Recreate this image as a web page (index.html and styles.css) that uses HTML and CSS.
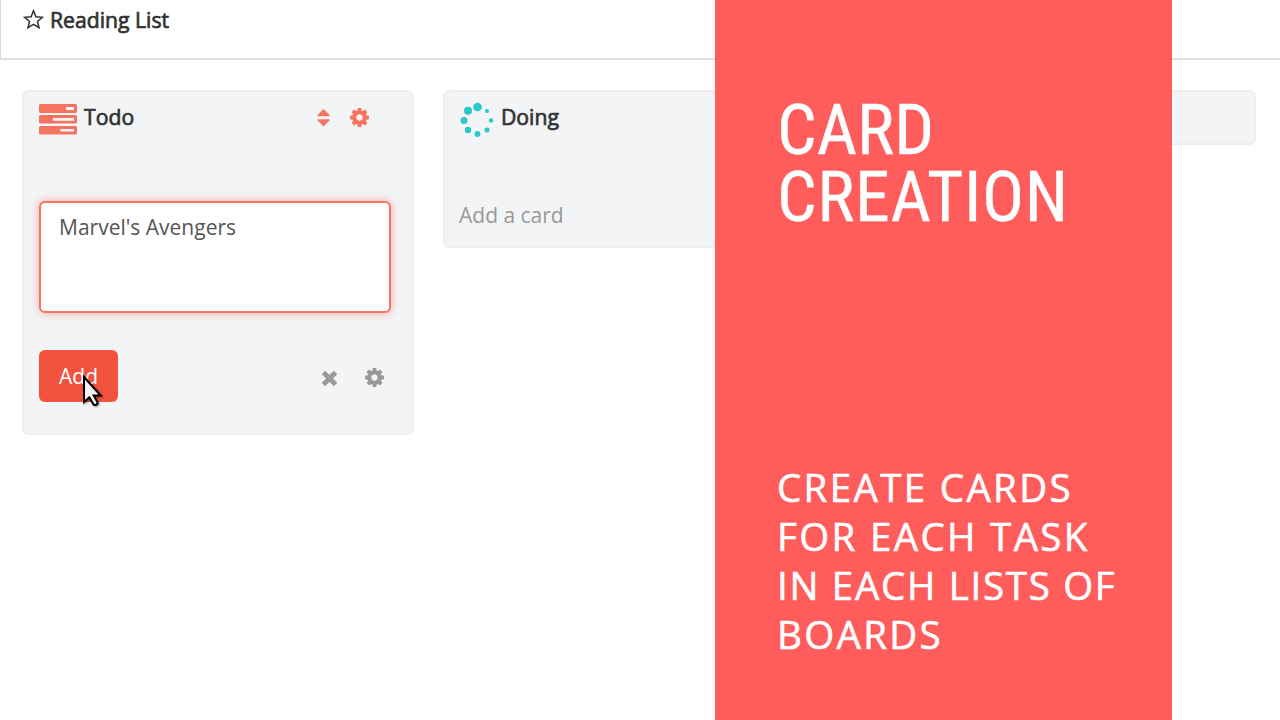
FILE: index.html
```html
<!DOCTYPE html>
<html lang="en">
<head>
<meta charset="utf-8">
<title>Reading List</title>
<link rel="stylesheet" href="styles.css">
</head>
<body>
<svg class="defs" aria-hidden="true">
  <symbol id="gear" viewBox="0 0 1536 1536">
    <path d="M1024 768q0-106-75-181t-181-75-181 75-75 181 75 181 181 75 181-75 75-181zm512-109v222q0 12-8 23t-20 13l-185 28q-19 54-39 91 35 50 107 138 10 12 10 25t-9 23q-27 37-99 108t-94 71q-12 0-26-9l-138-108q-44 23-91 38-16 136-29 186-7 28-36 28H657q-14 0-24.500-8.500T621 1506l-28-184q-49-16-90-37l-141 107q-10 9-25 9-14 0-25-11-126-114-165-168-7-10-7-23 0-12 8-23 15-21 51-66.500t54-70.500q-27-50-41-99L29 913q-13-2-21-12.500T0 877V655q0-12 8-23t19-13l186-28q14-46 39-92-40-57-107-138-10-12-10-24 0-10 9-23 26-36 98.500-107.500T337 135q13 0 26 10l138 107q44-23 91-38 16-136 29-186 7-28 36-28h222q14 0 24.500 8.500T915 30l28 184q49 16 90 37l142-107q9-9 24-9 13 0 25 10 129 119 165 170 7 8 7 22 0 12-8 23-15 21-51 66.500t-54 70.500q26 50 41 98l183 28q13 2 21 12.500t8 23.500z"/>
  </symbol>
</svg>
<div class="screen">
  <header class="board-bar">
    <svg class="star" viewBox="0 0 22 22"><path d="M11 1.800 13.500 8.100 20.300 8.700 15.100 13 16.800 19.500 11 16 5.200 19.500 6.900 13 1.700 8.700 8.500 8.100Z"/></svg>
    <h1 class="board-name">Reading List</h1>
  </header>
  <main class="lists">
    <section class="list list-todo">
      <div class="list-head">
        <svg class="tasks" viewBox="0 0 38 31"><path fill-rule="evenodd" d="M1.500 0h35q1.500 0 1.500 1.500v6q0 1.500-1.500 1.500h-35Q0 9 0 7.500v-6Q0 0 1.500 0ZM27 3v3h8V3ZM1.500 11h35q1.500 0 1.500 1.500v5.500q0 1.500-1.500 1.500h-35Q0 19.500 0 18v-5.500Q0 11 1.500 11ZM14 14v2.700h21V14ZM1.500 22h35q1.500 0 1.500 1.500V29q0 1.500-1.500 1.500h-35Q0 30.500 0 29v-5.500Q0 22 1.500 22ZM21.500 25v2.600H35V25Z"/></svg>
        <h2 class="list-name">Todo</h2>
        <svg class="sort" viewBox="0 0 13 18"><path d="M6.500 0 12.700 6.200Q13 7.200 12.200 7.200H.8Q0 7.200.3 6.200ZM6.500 17.600 12.700 11.300Q13 10.300 12.200 10.300H.8Q0 10.300.3 11.300Z"/></svg>
        <svg class="gear gear-head"><use href="#gear"/></svg>
      </div>
      <div class="card-input"><span class="card-text">Marvel's Avengers</span></div>
      <div class="actions">
        <div class="add"><span class="add-text">Add</span>
          <svg class="cursor" viewBox="0 0 22 32"><path d="M2 2v25l5.400-4.800 4 7q1 1.400 3 .4 1.800-1 .9-2.600l-3.600-6.400h7Z"/></svg>
        </div>
        <svg class="close" viewBox="0 0 16 16"><path d="M2.300 2.300 13.700 13.700M13.700 2.300 2.300 13.700"/></svg>
        <svg class="gear"><use href="#gear"/></svg>
      </div>
    </section>
    <section class="list list-doing">
      <div class="list-head">
        <svg class="spinner" viewBox="0 0 34 36"><circle cx="17.500" cy="5" r="4.300"/><circle cx="8" cy="8.800" r="4"/><circle cx="4" cy="18.500" r="3.500"/><circle cx="8" cy="28" r="3.200"/><circle cx="17.500" cy="32" r="2.900"/><circle cx="27" cy="28" r="2.500"/><circle cx="31" cy="18.500" r="2.200"/><circle cx="27" cy="9" r="2"/></svg>
        <h2 class="list-name">Doing</h2>
      </div>
      <div class="add-card">Add a card</div>
    </section>
    <section class="list list-new"></section>
  </main>
  <aside class="panel">
    <h2 class="title"><span class="title-short">Card</span><br>Creation</h2>
    <p class="caption">Create cards<br>for each task<br><span class="caption-long">in each lists of</span><br>boards</p>
  </aside>
</div>
</body>
</html>
```
FILE: styles.css
```css
* { box-sizing: border-box; }
body { margin: 0; background: #fff; font-family: "Open Sans", "Noto Sans", sans-serif; color: #333; }
h1, h2, p { margin: 0; font-weight: 400; }
svg { flex: none; display: block; }
.defs { position: absolute; width: 0; height: 0; }
.screen { position: relative; width: 1280px; height: 720px; overflow: hidden; }
.board-bar { display: flex; align-items: flex-start; height: 60px; padding: 5px 0 0 22px; border-left: 1px solid #d8d8d8; border-bottom: 2px solid #e0e0e0; }
.star { width: 21px; height: 21px; margin: 4px 6px 0 0; fill: none; stroke: #333; stroke-width: 1.6; }
.board-name, .list-name { font-size: 21.200px; line-height: 30px; white-space: nowrap; -webkit-text-stroke: 0.7px #333; }
.lists { display: flex; align-items: flex-start; gap: 29px; padding: 30px 0 0 22px; }
.list { flex: none; width: 392px; border: 2px solid #eeeeef; border-radius: 7px; background: #f2f4f6; }
.list-todo { height: 345px; padding: 12px 20px 0 15px; }
.list-doing { height: 158px; padding: 10px 14px 0 15px; }
.list-new { height: 55px; }
.list-head { display: flex; height: 40px; }
.tasks { width: 38px; height: 31px; margin-right: 7px; fill: #f6745f; }
.list-todo .list-name { margin-top: -2px; }
.sort { width: 13px; height: 18px; margin: 5px 20px 0 auto; fill: #f6745f; }
.gear { width: 19px; height: 19px; fill: #999; }
.gear-head { margin: 4px 23px 0 0; fill: #f6745f; }
.card-input { width: 352px; height: 112px; margin-top: 57px; padding: 8px 17px; border: 2px solid #f77463; border-radius: 6px; background: #fff; box-shadow: 0 0 9px rgba(246, 100, 80, .55); }
.card-text { display: block; font-size: 21px; line-height: 30px; color: #555; padding-top: 1px; padding-left: 1px; }
.actions { display: flex; align-items: flex-start; margin-top: 37px; padding-right: 8px; }
.add { position: relative; width: 79px; height: 52px; padding-left: 20px; margin-right: auto; border-radius: 6px; background: #f2533e; color: #fff; font-size: 21px; line-height: 52px; }
.cursor { position: absolute; left: 43px; top: 25px; width: 22px; height: 32px; fill: #f4f4f4; stroke: #000; stroke-width: 2; filter: drop-shadow(1px 1px 1px rgba(0, 0, 0, .4)); }
.close { width: 17px; height: 17px; margin: 20px 27px 0 0; stroke: #999; stroke-width: 4.500; }
.actions .gear { margin-top: 18px; }
.spinner { width: 34px; height: 36px; margin-right: 7px; fill: #2ac6c8; }
.add-card { margin: 58px 0 0 -1px; font-size: 21px; line-height: 30px; color: #999; }
.panel { position: absolute; left: 715px; top: 0; width: 457px; height: 720px; padding: 97px 0 0 62px; background: #ff5c5c; color: #fff; text-transform: uppercase; white-space: nowrap; }
.title { font: 400 70px/67px "Roboto Condensed", Roboto, sans-serif; height: 366px; letter-spacing: 0.600px; -webkit-text-stroke: 0.300px #fff; }
.title-short { letter-spacing: 0; }
.caption { font: 400 38.500px/49px "Open Sans", sans-serif; letter-spacing: 2.350px; -webkit-text-stroke: 0.600px #fff; }
.caption-long { letter-spacing: 1.700px; }
```
